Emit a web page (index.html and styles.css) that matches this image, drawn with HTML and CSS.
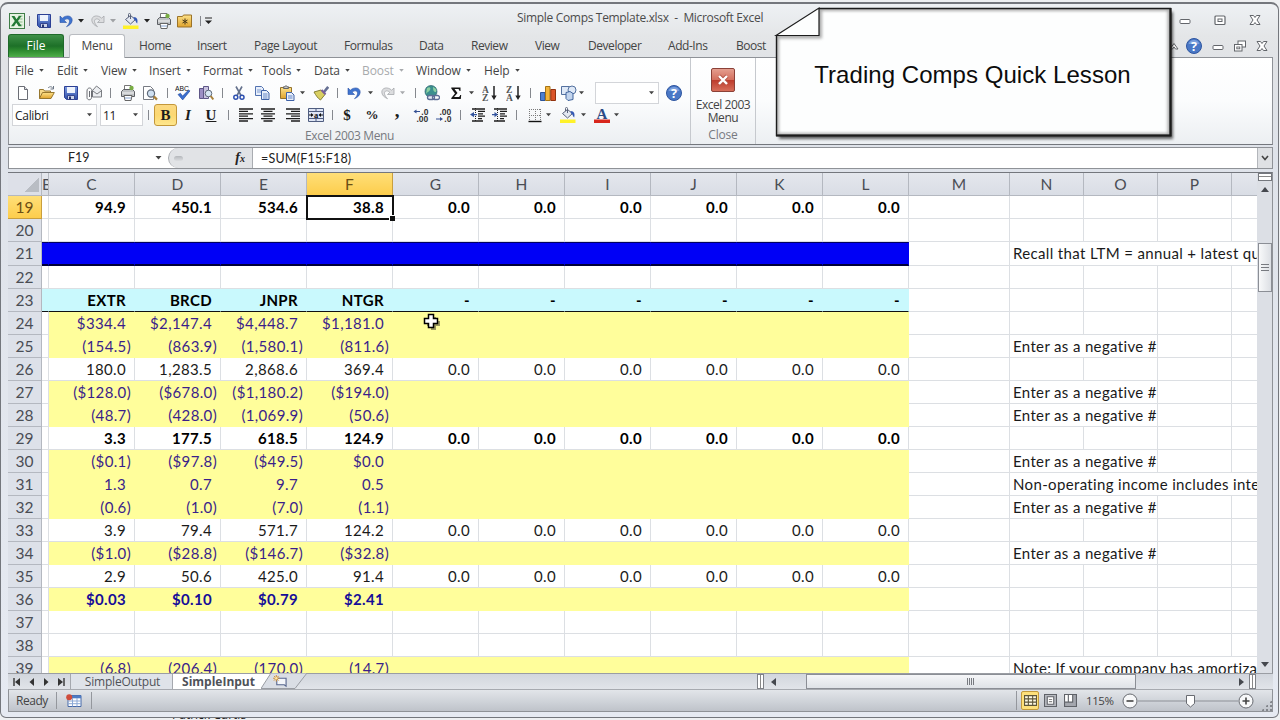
FILE: index.html
```html
<!DOCTYPE html>
<html lang="en">
<head>
    <meta charset="UTF-8">
    <meta name="viewport" content="width=device-width, initial-scale=1.0">
    <title>Simple Comps Template.xlsx - Microsoft Excel</title>
    <link rel="stylesheet" href="styles.css">
</head>
<body>
    <!-- Icon set -->
    <svg class="icon-defs" width="0" height="0">
        <defs>
            <linearGradient id="gBlue" x1="0" y1="0" x2="0" y2="1"><stop offset="0" stop-color="#7c9be0"/><stop offset="1" stop-color="#2f4fa8"/></linearGradient>
            <linearGradient id="gRed" x1="0" y1="0" x2="0" y2="1"><stop offset="0" stop-color="#e5a091"/><stop offset=".48" stop-color="#d4705f"/><stop offset=".52" stop-color="#bd3c2c"/><stop offset="1" stop-color="#d8705c"/></linearGradient>
            <linearGradient id="gGold" x1="0" y1="0" x2="0" y2="1"><stop offset="0" stop-color="#fde28a"/><stop offset="1" stop-color="#e0a32c"/></linearGradient>
        </defs>
        <symbol id="drop" viewBox="0 0 6 4"><path d="M0 0h6L3 3.6z" fill="currentColor"/></symbol>
        <symbol id="excel" viewBox="0 0 16 16"><rect x=".5" y=".5" width="15" height="15" fill="#e6f3e2" stroke="#3f7d47"/><path d="M9.5 3h4M9.5 6h4M9.5 9h4M9.5 12h4" stroke="#8dbb8b"/><path d="M2.500 3h3l2 3.300L9.800 3h2.700L9 8l3.800 5.300H9.600L7.300 9.700 5 13.300H2L5.800 8z" fill="#237a35"/></symbol>
        <symbol id="save" viewBox="0 0 16 16"><path d="M1.500 1.500h13v13h-11l-2-2z" fill="url(#gBlue)" stroke="#2c3f94"/><path d="M4 2h8v6H4z" fill="#eef3fc"/><path d="M4.500 10.500h7v4h-7z" fill="#cdd5ea" stroke="#34458f"/><path d="M6 11.500h2v3H6z" fill="#26346f"/></symbol>
        <symbol id="undo" viewBox="0 0 16 16"><path d="M2 3v6.500h6.500L6.200 7.300c2.600-2.500 5.500-1.500 5.300 1.200-.1 1.900-1.300 3.400-3 5.200 3.500-1.500 5.600-3.700 5.700-6.500C14.300 2.800 8.600 1.300 4.300 5.200z" fill="#3f74cf" stroke="#2a51a5" stroke-width=".6"/></symbol>
        <symbol id="redo" viewBox="0 0 16 16"><path d="M14 3v6.500H7.500l2.300-2.200C7.200 4.800 4.300 5.800 4.500 8.500c.1 1.900 1.300 3.400 3 5.200C4 12.200 1.900 10 1.800 7.200 1.700 2.800 7.400 1.300 11.700 5.200z" fill="#dcdddf" stroke="#a6a8ac" stroke-width=".8"/></symbol>
        <symbol id="bucket" viewBox="0 0 16 16"><path d="M2.500 6.500l5-4 5 4-5 4.500z" fill="#e3e8f1" stroke="#59627a"/><path d="M7.500 6V1.500c0-1.500-2-1.500-2 0V4" fill="none" stroke="#59627a"/><path d="M10.500 4c4 0 4.500 3 3.700 6.500C12.500 9.500 13 7 11 6.500z" fill="#3559b3"/><path d="M0 12.500h15.500V16H0z" fill="#fff22a"/></symbol>
        <symbol id="print" viewBox="0 0 16 16"><path d="M4.500 5V.5H11l1.500 2V6z" fill="#fff" stroke="#777"/><path d="M1.500 6.500l2-2h9l2 2v5h-13z" fill="#bfc2c5" stroke="#5d6064"/><path d="M2 8h12" stroke="#f4f4f4"/><path d="M4 10.500h8l-1 5H5z" fill="#fff" stroke="#666"/><path d="M5 13h6" stroke="#86a3cf"/><circle cx="11.500" cy="3" r="2.200" fill="#79ad43"/></symbol>
        <symbol id="folderStar" viewBox="0 0 16 16"><path d="M.5 3.500h5l1-1.500h8v12h-14z" fill="url(#gGold)" stroke="#9b7328"/><path d="M8 5.500v6M5.500 7l5 3M10.500 7l-5 3" stroke="#463717"/></symbol>
        <symbol id="custom" viewBox="0 0 8 8"><path d="M0 1h7" stroke="#222"/><path d="M0 3.500h7L3.500 7z" fill="#222"/></symbol>
        <symbol id="new" viewBox="0 0 16 16"><path d="M3.500 1.500h6l3 3v10h-9z" fill="#fff" stroke="#6a6d75"/><path d="M9.500 1.500v3h3" fill="#dde0e6" stroke="#6a6d75"/></symbol>
        <symbol id="open" viewBox="0 0 16 16"><path d="M.5 13.500v-9h4l1 1.500h6v3" fill="#f6d98a" stroke="#96772f"/><path d="M.5 13.500l3-6h11.800l-3.300 6z" fill="url(#gGold)" stroke="#96772f"/><path d="M9 3c2-2 4-1.500 5 .5M14.500 1v3h-3" fill="none" stroke="#6c7786"/></symbol>
        <symbol id="mail" viewBox="0 0 16 16"><path d="M6.500 5.500L10.500 1l5 4v7h-9z" fill="#eceef1" stroke="#7a7d82"/><path d="M7 6l4 3 4-3" fill="none" stroke="#7a7d82"/><path d="M5.500 6v6.500c0 3-4.500 3-4.500 0V6c0-4 5-4 5 0v6M3.500 6v6" fill="none" stroke="#6a6d73"/></symbol>
        <symbol id="preview" viewBox="0 0 16 16"><path d="M1.500 1.500h7l3 3v10h-10z" fill="#fff" stroke="#777b83"/><circle cx="9" cy="8.500" r="3.600" fill="#cfe0f1" stroke="#606b7b" stroke-width="1.200"/><path d="M11.800 11.400l3.200 3.200" stroke="#a8803a" stroke-width="2.200"/></symbol>
        <symbol id="spell" viewBox="0 0 16 16"><text x="0" y="5.500" font-family="Liberation Sans" font-size="6.800" fill="#111">ABC</text><path d="M3 9.500l2.500-1.200 2 2.800 6-6 1.500.8-7.300 9z" fill="#3b6fd0" stroke="#23489a" stroke-width=".6"/></symbol>
        <symbol id="research" viewBox="0 0 16 16"><path d="M1.500 3.500h4v10h-4z" fill="#9c8fc4" stroke="#5e5687"/><path d="M5.500 1.500h5v12h-5z" fill="#c9c3e0" stroke="#5e5687"/><circle cx="10.500" cy="8.500" r="3.300" fill="#d8e7f5" stroke="#5e6979"/><path d="M12.700 11l2.600 3.500" stroke="#a8803a" stroke-width="2"/></symbol>
        <symbol id="cut" viewBox="0 0 16 16"><path d="M5 1.500l5 9M11 1.500l-5 9" stroke="#64718c" stroke-width="1.600"/><circle cx="4.800" cy="12.300" r="2" fill="none" stroke="#2e50b0" stroke-width="1.500"/><circle cx="11" cy="12.300" r="2" fill="none" stroke="#2e50b0" stroke-width="1.500"/></symbol>
        <symbol id="copy" viewBox="0 0 16 16"><path d="M1.500 1.500h6l2 2v7h-8z" fill="#e8effb" stroke="#5272b0"/><path d="M3 5h4M3 7h4" stroke="#7e9bd0"/><path d="M7.500 5.500h5l2.500 2.500v6.500H7.500z" fill="#e8effb" stroke="#3e61a6"/><path d="M9 9h4.500M9 11h4.500M9 13h4.500" stroke="#6486c6"/></symbol>
        <symbol id="paste" viewBox="0 0 16 16"><path d="M1.500 2.500h11v11h-11z" fill="url(#gGold)" stroke="#94722c"/><path d="M4.500 3.500V1.800h1.500L7 .5l1 1.300h1.500v1.700z" fill="#c7c9cc" stroke="#666"/><path d="M7.500 7.500h5l2.500 2.500v5.500H7.500z" fill="#e8effb" stroke="#3e61a6"/><path d="M9 11h4.500M9 13h4.500" stroke="#6486c6"/></symbol>
        <symbol id="brush" viewBox="0 0 16 16"><path d="M15.200 1.800L11 7" stroke="#656f93" stroke-width="2.600"/><path d="M1 7l7-2 4 4.500-4.500 5.500C5 13.500 3 10.500 1 7z" fill="#d9cf62" stroke="#857f35"/><path d="M8.500 5l4 4.300" stroke="#7a5f9c" stroke-width="2"/></symbol>
        <symbol id="globe" viewBox="0 0 16 16"><circle cx="7" cy="6.500" r="6" fill="#3b8f8e" stroke="#28616e" stroke-width=".7"/><path d="M3 3c3-2 4 0 3 2S3 7 2 9M9 2c3 1 4 3 3 5-2 0-3-1-3-5z" fill="#8cd0a2"/><rect x="3.500" y="10.500" width="7" height="4" rx="2" fill="#e6ebf5" stroke="#5c6d95" stroke-width="1.300"/><rect x="8.500" y="10.500" width="7" height="4" rx="2" fill="none" stroke="#5c6d95" stroke-width="1.300"/></symbol>
        <symbol id="sigma" viewBox="0 0 16 16"><path d="M3.300 2.500h9.200V6h-1c-.2-1.400-.7-1.900-2-1.900H6.500L9.500 8l-3.500 4h4c1.400 0 1.900-.5 2.200-2h1l-.4 4H3.300v-.9L7 8.500 3.300 3.600z" fill="#151515"/></symbol>
        <symbol id="sortAz" viewBox="0 0 16 16"><text x="0" y="7.500" font-family="Liberation Serif" font-size="9.500" font-weight="700" fill="#555">A</text><text x="0" y="15.500" font-family="Liberation Serif" font-size="9.500" font-weight="700" fill="#555">Z</text><path d="M12 1v11" stroke="#222" stroke-width="1.500"/><path d="M9.300 10.500h5.400L12 15z" fill="#222"/></symbol>
        <symbol id="sortZa" viewBox="0 0 16 16"><text x="0" y="7.500" font-family="Liberation Serif" font-size="9.500" font-weight="700" fill="#555">Z</text><text x="0" y="15.500" font-family="Liberation Serif" font-size="9.500" font-weight="700" fill="#555">A</text><path d="M12 1v11" stroke="#222" stroke-width="1.500"/><path d="M9.300 10.500h5.400L12 15z" fill="#222"/></symbol>
        <symbol id="chart" viewBox="0 0 16 16"><path d="M.5 7.500h4.500v8H.5z" fill="#4d80d0" stroke="#2c5499"/><path d="M5.500 1.500h4.500v14H5.500z" fill="#f3b43a" stroke="#a67414"/><path d="M10.800 4.500h4.700v11h-4.700z" fill="#db552a" stroke="#92330f"/></symbol>
        <symbol id="shapes" viewBox="0 0 16 16"><path d="M.5 1.500h8v8h-8z" fill="#dfe9f7" stroke="#54719f"/><circle cx="11" cy="5" r="4" fill="#dfe9f7" stroke="#54719f"/><path d="M5 7.500l4-1 3 2v6l-5 1-2-2z" fill="#c3d5ee" stroke="#3f639c"/></symbol>
        <symbol id="help" viewBox="0 0 16 16"><circle cx="8" cy="8" r="7.500" fill="#4a78c6" stroke="#2f56a0"/><path d="M2.500 6a5.800 5.800 0 0 1 11 0" fill="#7ba0dd"/><text x="8" y="12.600" text-anchor="middle" font-family="Open Sans" font-size="12.500" font-weight="700" fill="#fff">?</text></symbol>
        <symbol id="alignL" viewBox="0 0 16 16"><path d="M1 2h14M1 4.400h9M1 6.800h14M1 9.200h9M1 11.600h14M1 14h9" stroke="#1d1d1d" stroke-width="1.300"/></symbol>
        <symbol id="alignC" viewBox="0 0 16 16"><path d="M1 2h14M3.500 4.400h9M1 6.800h14M3.500 9.200h9M1 11.600h14M3.500 14h9" stroke="#1d1d1d" stroke-width="1.300"/></symbol>
        <symbol id="alignR" viewBox="0 0 16 16"><path d="M1 2h14M6 4.400h9M1 6.800h14M6 9.200h9M1 11.600h14M6 14h9" stroke="#1d1d1d" stroke-width="1.300"/></symbol>
        <symbol id="merge" viewBox="0 0 16 16"><path d="M.5 1.500h15v13H.5z" fill="#dfe6f5" stroke="#4f5d80"/><path d="M.5 4.500h15M.5 11.500h15M8 1.500v3M8 11.500v3" stroke="#4f5d80"/><path d="M1 8h3.500M15 8h-3.500" stroke="#111"/><path d="M3 6l2.500 2L3 10zM13 6l-2.500 2 2.500 2z" fill="#111"/><text x="8" y="10.500" text-anchor="middle" font-family="Liberation Serif" font-size="8.500" font-weight="700" fill="#111">a</text></symbol>
        <symbol id="decInc" viewBox="0 0 16 16"><text x="8.300" y="7.500" font-family="Liberation Sans" font-size="8.500" font-weight="700" fill="#333">.0</text><text x="3.500" y="15" font-family="Liberation Sans" font-size="8.500" font-weight="700" fill="#333">.00</text><path d="M2 4.500h5" stroke="#334f92"/><path d="M3.500 2.500v4L.5 4.500z" fill="#334f92"/></symbol>
        <symbol id="decDec" viewBox="0 0 16 16"><text x="3.500" y="7.500" font-family="Liberation Sans" font-size="8.500" font-weight="700" fill="#333">.00</text><text x="8.300" y="15" font-family="Liberation Sans" font-size="8.500" font-weight="700" fill="#333">.0</text><path d="M0 12h5" stroke="#334f92"/><path d="M4 10v4l3-2z" fill="#334f92"/></symbol>
        <symbol id="outdent" viewBox="0 0 16 16"><path d="M2 2h13M8 4.400h7M8 6.800h5M8 9.200h7M8 11.600h4M2 14h11" stroke="#1d1d1d" stroke-width="1.300"/><path d="M5.500 1v14" stroke="#222" stroke-dasharray="1 1"/><path d="M0 7.500L4 5v2h3v1.200H4v2z" fill="#33559f"/></symbol>
        <symbol id="indent" viewBox="0 0 16 16"><path d="M2 2h13M8 4.400h7M8 6.800h5M8 9.200h7M8 11.600h4M2 14h11" stroke="#1d1d1d" stroke-width="1.300"/><path d="M5.500 1v14" stroke="#222" stroke-dasharray="1 1"/><path d="M6 7.500L2.500 5v2H0v1.200h2.500v2z" fill="#33559f"/></symbol>
        <symbol id="borders" viewBox="0 0 16 16"><path d="M2 2.500h12M2.500 2v12M8.500 2v12M13.500 2v12M2 8.500h12" fill="none" stroke="#7a7a7a" stroke-dasharray="1 1"/><path d="M1.500 14.500h13" stroke="#111" stroke-width="1.400"/></symbol>
        <symbol id="fontColor" viewBox="0 0 16 16"><text x="8" y="11.500" text-anchor="middle" font-family="Liberation Serif" font-size="15" font-weight="700" fill="#2c4a86">A</text><path d="M0 12.500h16V16H0z" fill="#d8261c"/></symbol>
        <symbol id="closeBig" viewBox="0 0 24 24"><rect x=".5" y=".5" width="23" height="23" rx="1.500" fill="url(#gRed)" stroke="#8b4138"/><path d="M8 8l8 8M16 8l-8 8" stroke="#b55346" stroke-width="4"/><path d="M8 8l8 8M16 8l-8 8" stroke="#fff" stroke-width="2.400"/></symbol>
        <symbol id="wMin" viewBox="0 0 12 12"><rect x="1" y="5.500" width="10" height="4" rx="1" fill="#fff" stroke="#63666b"/></symbol>
        <symbol id="wMax" viewBox="0 0 12 12"><rect x="1" y="2" width="10" height="8.500" rx="1" fill="#fff" stroke="#63666b" stroke-width="1.200"/><rect x="4" y="5" width="4" height="2.500" fill="#fff" stroke="#63666b"/></symbol>
        <symbol id="wRestore" viewBox="0 0 12 12"><rect x="4" y="1" width="7.500" height="6" fill="#fff" stroke="#63666b"/><rect x=".5" y="4.500" width="7.500" height="6.500" fill="#fff" stroke="#63666b"/><rect x="2.800" y="7" width="3" height="1.800" fill="none" stroke="#63666b" stroke-width=".9"/></symbol>
        <symbol id="wClose" viewBox="0 0 12 12"><path d="M1 1.500h3.500L6 3.500l1.500-2H11L8 6l3 4.500H7.500L6 8.500l-1.500 2H1L4 6z" fill="#fff" stroke="#63666b"/></symbol>
        <symbol id="wUp" viewBox="0 0 12 12"><path d="M2 9l4-5.500L10 9H7.500L6 7 4.500 9z" fill="#fff" stroke="#63666b"/></symbol>
        <symbol id="newSheet" viewBox="0 0 16 14"><path d="M4 3.500h10v8.500l-2-1.500H4z" fill="#f4f6fa" stroke="#56658e" stroke-width="1.200"/><path d="M3.500 0v7M0 3.500h7M1 1l5 5M6 1L1 6" stroke="#d48b25"/><circle cx="3.500" cy="3.500" r="1.300" fill="#ffe9a8"/></symbol>
        <symbol id="macro" viewBox="0 0 16 14"><path d="M2 1.500h13v11H2z" fill="#fff" stroke="#4669a8"/><path d="M2 1.500h13v2.800H2z" fill="#4f7cc4"/><path d="M2 7h13M2 9.700h13M6.500 4v8.500M11 4v8.500" stroke="#8ca9d6"/><circle cx="3.200" cy="3.200" r="3" fill="#cf4c3b"/></symbol>
    </svg>

    <div class="behind">Patrick Curtis</div>

    <div class="window">
        <!-- Title bar -->
        <header class="titlebar">
            <div class="qat">
                <svg class="icon"><use href="#excel"/></svg>
                <i class="sep"></i>
                <svg class="icon"><use href="#save"/></svg>
                <svg class="icon"><use href="#undo"/></svg>
                <svg class="drop"><use href="#drop"/></svg>
                <svg class="icon"><use href="#redo"/></svg>
                <svg class="drop dim"><use href="#drop"/></svg>
                <svg class="icon"><use href="#bucket"/></svg>
                <svg class="drop"><use href="#drop"/></svg>
                <svg class="icon"><use href="#print"/></svg>
                <svg class="icon"><use href="#folderStar"/></svg>
                <i class="sep"></i>
                <svg class="custom"><use href="#custom"/></svg>
            </div>
            <h1 class="title">Simple Comps Template.xlsx&nbsp; -&nbsp; Microsoft Excel</h1>
            <div class="controls">
                <svg><use href="#wMin"/></svg>
                <svg><use href="#wMax"/></svg>
                <svg><use href="#wClose"/></svg>
            </div>
        </header>

        <!-- Ribbon tabs -->
        <nav class="tabs">
            <span class="tab-file">File</span>
            <span class="tab-active">Menu</span>
            <div class="tab-list">
                <span>Home</span><span>Insert</span><span>Page Layout</span><span>Formulas</span><span>Data</span><span>Review</span><span>View</span><span>Developer</span><span>Add-Ins</span><span>Boost</span>
            </div>
            <div class="doc-controls">
                <svg><use href="#wUp"/></svg>
                <svg class="icon"><use href="#help"/></svg>
                <svg><use href="#wMin"/></svg>
                <svg><use href="#wRestore"/></svg>
                <svg><use href="#wClose"/></svg>
            </div>
        </nav>

        <!-- Ribbon -->
        <section class="ribbon">
            <div class="group group-menu">
                <div class="menus">
                    <span>File<svg class="drop"><use href="#drop"/></svg></span>
                    <span>Edit<svg class="drop"><use href="#drop"/></svg></span>
                    <span>View<svg class="drop"><use href="#drop"/></svg></span>
                    <span>Insert<svg class="drop"><use href="#drop"/></svg></span>
                    <span>Format<svg class="drop"><use href="#drop"/></svg></span>
                    <span>Tools<svg class="drop"><use href="#drop"/></svg></span>
                    <span>Data<svg class="drop"><use href="#drop"/></svg></span>
                    <span class="dim">Boost<svg class="drop"><use href="#drop"/></svg></span>
                    <span>Window<svg class="drop"><use href="#drop"/></svg></span>
                    <span>Help<svg class="drop"><use href="#drop"/></svg></span>
                </div>
                <div class="tools tools-standard">
                    <svg class="icon"><use href="#new"/></svg>
                    <svg class="icon"><use href="#open"/></svg>
                    <svg class="icon"><use href="#save"/></svg>
                    <svg class="icon"><use href="#mail"/></svg>
                    <i class="sep"></i>
                    <svg class="icon"><use href="#print"/></svg>
                    <svg class="icon"><use href="#preview"/></svg>
                    <i class="sep"></i>
                    <svg class="icon"><use href="#spell"/></svg>
                    <svg class="icon"><use href="#research"/></svg>
                    <i class="sep"></i>
                    <svg class="icon"><use href="#cut"/></svg>
                    <svg class="icon"><use href="#copy"/></svg>
                    <svg class="icon"><use href="#paste"/></svg>
                    <svg class="drop"><use href="#drop"/></svg>
                    <svg class="icon"><use href="#brush"/></svg>
                    <i class="sep"></i>
                    <svg class="icon"><use href="#undo"/></svg>
                    <svg class="drop"><use href="#drop"/></svg>
                    <svg class="icon"><use href="#redo"/></svg>
                    <svg class="drop dim"><use href="#drop"/></svg>
                    <i class="sep"></i>
                    <svg class="icon"><use href="#globe"/></svg>
                    <svg class="icon"><use href="#sigma"/></svg>
                    <svg class="drop"><use href="#drop"/></svg>
                    <svg class="icon"><use href="#sortAz"/></svg>
                    <svg class="icon"><use href="#sortZa"/></svg>
                    <i class="sep"></i>
                    <svg class="icon"><use href="#chart"/></svg>
                    <svg class="icon"><use href="#shapes"/></svg>
                    <svg class="drop"><use href="#drop"/></svg>
                    <div class="combo combo-zoom"><svg class="drop"><use href="#drop"/></svg></div>
                    <svg class="icon"><use href="#help"/></svg>
                </div>
                <div class="tools tools-format">
                    <div class="combo combo-font">Calibri<svg class="drop"><use href="#drop"/></svg></div>
                    <div class="combo combo-size">11<svg class="drop"><use href="#drop"/></svg></div>
                    <i class="sep"></i>
                    <b class="letter bold-on">B</b>
                    <b class="letter italic">I</b>
                    <b class="letter underline">U</b>
                    <i class="sep"></i>
                    <svg class="icon"><use href="#alignL"/></svg>
                    <svg class="icon"><use href="#alignC"/></svg>
                    <svg class="icon"><use href="#alignR"/></svg>
                    <svg class="icon"><use href="#merge"/></svg>
                    <i class="sep"></i>
                    <b class="letter">$</b>
                    <b class="letter percent">%</b>
                    <b class="letter comma">,</b>
                    <svg class="icon"><use href="#decInc"/></svg>
                    <svg class="icon"><use href="#decDec"/></svg>
                    <i class="sep"></i>
                    <svg class="icon"><use href="#outdent"/></svg>
                    <svg class="icon"><use href="#indent"/></svg>
                    <i class="sep"></i>
                    <svg class="icon"><use href="#borders"/></svg>
                    <svg class="drop"><use href="#drop"/></svg>
                    <svg class="icon"><use href="#bucket"/></svg>
                    <svg class="drop"><use href="#drop"/></svg>
                    <svg class="icon"><use href="#fontColor"/></svg>
                    <svg class="drop"><use href="#drop"/></svg>
                </div>
                <div class="group-label">Excel 2003 Menu</div>
            </div>
            <div class="group group-close">
                <svg class="close-big"><use href="#closeBig"/></svg>
                <div class="close-text">Excel 2003<br>Menu</div>
                <div class="group-label">Close</div>
            </div>
        </section>

        <!-- Formula bar -->
        <section class="formula">
            <div class="name-box"><span>F19</span><svg class="drop"><use href="#drop"/></svg></div>
            <div class="fx"><i class="knob"></i><em>f<small>x</small></em></div>
            <div class="formula-text">=SUM(F15:F18)</div>
            <div class="formula-toggle"><svg viewBox="0 0 8 6"><path d="M1 1l3 3.500L7 1" fill="none" stroke="#444" stroke-width="1.600"/></svg></div>
        </section>

        <!-- Worksheet -->
        <main class="work">
            <div class="sheet" id="sheet"></div>
            <div class="vscroll">
                <div class="split"></div>
                <i class="arrow up"></i>
                <div class="vthumb"></div>
                <i class="arrow down"></i>
            </div>
        </main>

        <!-- Sheet tabs -->
        <div class="sheetbar">
            <div class="sheet-nav">
                <svg viewBox="0 0 8 8"><path d="M1 0v8" stroke="#333" stroke-width="1.400"/><path d="M7 0v8L2 4z" fill="#333"/></svg>
                <svg viewBox="0 0 8 8"><path d="M6 0v8L1.500 4z" fill="#333"/></svg>
                <svg viewBox="0 0 8 8"><path d="M2 0v8l4.500-4z" fill="#333"/></svg>
                <svg viewBox="0 0 8 8"><path d="M7 0v8" stroke="#333" stroke-width="1.400"/><path d="M1 0v8l5-4z" fill="#333"/></svg>
            </div>
            <div class="sheet-tab">SimpleOutput</div>
            <div class="sheet-tab active">SimpleInput</div>
            <div class="sheet-tab add">
                <svg class="add-edge" viewBox="0 0 46 16"><path d="M0 15.500L10 0h36L34 15.500z" fill="#dadee5" stroke="#9a9da3"/></svg>
                <svg class="add-icon"><use href="#newSheet"/></svg>
            </div>
            <div class="hscroll">
                <i class="hsplit"></i>
                <i class="arrow left"></i>
                <div class="hthumb"></div>
                <i class="arrow right"></i>
                <i class="hsplit"></i>
            </div>
        </div>

        <!-- Status bar -->
        <footer class="status">
            <span class="ready">Ready</span>
            <svg class="macro"><use href="#macro"/></svg>
            <i class="status-sep"></i>
            <div class="views">
                <div class="view on"><svg viewBox="0 0 12 12"><path d="M.5 1.500h11v9H.5zM.5 4.500h11M.5 7.500h11M4 1.500v9M8 1.500v9" fill="#fffbe5" stroke="#5d5538"/></svg></div>
                <div class="view"><svg viewBox="0 0 12 12"><path d="M.5.5h11v11H.5z" fill="#b9bcc2" stroke="#5f6268"/><path d="M3 2.500h6v7H3z" fill="#fff" stroke="#5f6268"/><path d="M4.500 5h3M4.500 7h3" stroke="#888"/></svg></div>
                <div class="view"><svg viewBox="0 0 12 12"><path d="M.5.5h11v11H.5z" fill="#a4a7ae" stroke="#5f6268"/><path d="M.5.500h3.500v7H.5zM4 .5h4v7H4z" fill="#fff" stroke="#5f6268"/></svg></div>
            </div>
            <span class="percent-text">115%</span>
            <svg class="zoomer" viewBox="0 0 134 18">
                <path d="M17 9h100" stroke="#8d9097"/>
                <circle cx="9" cy="9" r="7" fill="#f7f8f9" stroke="#686b71"/><path d="M5.500 9h7" stroke="#444" stroke-width="1.600"/>
                <path d="M65.500 3.500h8v8l-4 3.500-4-3.500z" fill="#fff" stroke="#686b71"/>
                <circle cx="125" cy="9" r="7" fill="#f7f8f9" stroke="#686b71"/><path d="M121.500 9h7M125 5.500v7" stroke="#444" stroke-width="1.600"/>
            </svg>
            <i class="grip"></i>
        </footer>
    </div>

    <!-- Callout over the window -->
    <div class="callout">
        <svg viewBox="0 0 404 138" width="404" height="138">
            <defs>
                <filter id="soft" x="-5%" y="-10%" width="110%" height="120%"><feGaussianBlur stdDeviation="1.600"/></filter>
                <clipPath id="noteClip"><path d="M2 29.500L45 2h351.500v128H2z"/></clipPath>
            </defs>
            <path d="M5 33L48 6h351v127H5z" fill="#000" opacity=".6" filter="url(#soft)"/>
            <path d="M2 29.500L45 2h351.500v128H2z" fill="#fdfefe"/>
            <g clip-path="url(#noteClip)">
                <path d="M2 29.500h43V2h351.500v128H2z" fill="none" stroke="#777" stroke-width="6" opacity=".6" filter="url(#soft)"/>
                <path d="M2 29.500L45 2v27.500z" fill="#fdfefe"/>
            </g>
            <path d="M2 29.500L45 2v27.500z" fill="none" stroke="#1c1c1c" stroke-width="1.200"/>
            <path d="M45 2.500h351.500v127H2.500v-100" fill="none" stroke="#1c1c1c" stroke-width="1.400"/>
            <path d="M396.500 2v127.500H2" fill="none" stroke="#1c1c1c" stroke-width="2.200"/>
        </svg>
        <p>Trading Comps Quick Lesson</p>
    </div>

    <!-- Cell cursor -->
    <svg class="cursor" viewBox="0 0 18 18"><path d="M8 4h5v4h4v5h-4v4H8v-4H4V8h4z" fill="#000" opacity=".4"/><path d="M5.500 1.500h5v4h4v5h-4v4h-5v-4h-4v-5h4z" fill="#fff" stroke="#000" stroke-width="1.500"/></svg>

    <script>
        const sheet = document.getElementById("sheet");
        const letters = ["B", "C", "D", "E", "F", "G", "H", "I", "J", "K", "L", "M", "N", "O", "P", ""];
        const zeros = ["0.0", "0.0", "0.0", "0.0", "0.0", "0.0"];
        const dashes = ["-", "-", "-", "-", "-", "-"];
        const negative = "Enter as a negative #";

        // type: plain, bold, banner, head, input, total
        const rows = [
            { n: 19, type: "bold", cells: ["94.9", "450.1", "534.6", "38.8", ...zeros] },
            { n: 20, type: "plain" },
            { n: 21, type: "banner", note: "Recall that LTM = annual + latest quarter" },
            { n: 22, type: "plain" },
            { n: 23, type: "head", cells: ["EXTR", "BRCD", "JNPR", "NTGR", ...dashes] },
            { n: 24, type: "input", cells: ["$334.4", "$2,147.4", "$4,448.7", "$1,181.0"] },
            { n: 25, type: "input", cells: ["(154.5)", "(863.9)", "(1,580.1)", "(811.6)"], note: negative },
            { n: 26, type: "plain", cells: ["180.0", "1,283.5", "2,868.6", "369.4", ...zeros] },
            { n: 27, type: "input", cells: ["($128.0)", "($678.0)", "($1,180.2)", "($194.0)"], note: negative },
            { n: 28, type: "input", cells: ["(48.7)", "(428.0)", "(1,069.9)", "(50.6)"], note: negative },
            { n: 29, type: "bold", cells: ["3.3", "177.5", "618.5", "124.9", ...zeros] },
            { n: 30, type: "input", cells: ["($0.1)", "($97.8)", "($49.5)", "$0.0"], note: negative },
            { n: 31, type: "input", cells: ["1.3", "0.7", "9.7", "0.5"], note: "Non-operating income includes interest" },
            { n: 32, type: "input", cells: ["(0.6)", "(1.0)", "(7.0)", "(1.1)"], note: negative },
            { n: 33, type: "plain", cells: ["3.9", "79.4", "571.7", "124.2", ...zeros] },
            { n: 34, type: "input", cells: ["($1.0)", "($28.8)", "($146.7)", "($32.8)"], note: negative },
            { n: 35, type: "plain", cells: ["2.9", "50.6", "425.0", "91.4", ...zeros] },
            { n: 36, type: "input total", cells: ["$0.03", "$0.10", "$0.79", "$2.41"] },
            { n: 37, type: "plain" },
            { n: 38, type: "plain" },
            { n: 39, type: "input", cells: ["(6.8)", "(206.4)", "(170.0)", "(14.7)"], note: "Note: If your company has amortization" }
        ];

        function addCell(row, className, text) {
            const cell = document.createElement("div");
            cell.className = className;
            cell.textContent = text || "";
            row.appendChild(cell);
        }

        const head = document.createElement("div");
        head.className = "row col-heads";
        addCell(head, "corner");
        letters.forEach(l => addCell(head, l === "F" ? "col-head selected" : "col-head", l));
        sheet.appendChild(head);

        rows.forEach(data => {
            const row = document.createElement("div");
            row.className = "row " + data.type;
            addCell(row, data.n === 19 ? "row-head selected" : "row-head", data.n);
            addCell(row, "cell edge");
            for (let i = 0; i < 10; i++) {
                const text = data.cells && data.cells[i] ? data.cells[i] : "";
                let name = "cell num";
                if (text.startsWith("(")) name += " neg";
                if (data.n === 19 && i === 3) name += " active-cell";
                addCell(row, name, text);
            }
            addCell(row, "cell");
            if (data.note === negative) {
                addCell(row, "cell note short", data.note);
                addCell(row, "cell");
                addCell(row, "cell");
            } else if (data.note) {
                addCell(row, "cell note", data.note);
            } else {
                for (let i = 0; i < 4; i++) addCell(row, "cell");
            }
            sheet.appendChild(row);
        });
    </script>
</body>
</html>
```
FILE: styles.css
```css
* {
    margin: 0;
    padding: 0;
    box-sizing: border-box;
}

body {
    width: 1280px;
    height: 720px;
    overflow: hidden;
    position: relative;
    padding-top: 2px;
    background-color: #eef0f2;
    font-family: 'Open Sans', 'Noto Sans', sans-serif;
    font-size: 12px;
    color: #444;
}

.icon-defs {
    position: absolute;
}

.behind {
    position: absolute;
    left: 172px;
    top: 707px;
    font-size: 12px;
    line-height: 16px;
    color: #222;
}

/* Window frame */
.window {
    position: relative;
    width: 1279px;
    height: 716px;
    display: flex;
    flex-direction: column;
    padding: 0 5px 0 7px;
    border: 1px solid #74777d;
    border-top-width: 2px;
    border-radius: 8px 8px 6px 6px;
    background: linear-gradient(#eef1f4, #e4e6e8 32px, #e1e3e6 56px, #dfe3ea 150px, #e6eaf2);
}

.icon {
    width: 16px;
    height: 16px;
    display: block;
}

.drop {
    width: 6px;
    height: 4px;
    display: block;
    color: #444;
}

.sep {
    width: 1px;
    height: 10px;
    background-color: #85888e;
}

.dim,
.dim .drop,
.drop.dim {
    color: #a8aaad;
}

/* Title bar */
.titlebar {
    height: 30px;
    display: flex;
    align-items: flex-start;
}

.qat {
    width: 509px;
    height: 33px;
    padding-left: 1px;
    display: grid;
    grid-template-columns: 20px 7px 22px 20px 12px 20px 13px 21px 12px 21px 23px 4px 8px;
    align-items: center;
}

.qat .drop {
    color: #222;
}

.qat .drop.dim {
    color: #a0a2a5;
}

.custom {
    width: 8px;
    height: 8px;
    margin-left: 1px;
}

.title {
    width: 650px;
    font-size: 12px;
    font-weight: 400;
    line-height: 16px;
    margin-top: 6px;
    letter-spacing: -0.32px;
    white-space: nowrap;
    color: #4b4b4b;
}

.controls {
    display: flex;
    gap: 23px;
    padding-top: 10px;
    margin-left: 12px;
}

.controls svg,
.doc-controls svg {
    width: 12px;
    height: 12px;
    flex-shrink: 0;
}

/* Ribbon tabs */
.tabs {
    height: 23px;
    display: flex;
    align-items: stretch;
    line-height: 23px;
}

.tab-file {
    width: 56px;
    text-align: center;
    color: #fff;
    border: 1px solid #1f6a2a;
    border-bottom: none;
    border-radius: 3px 3px 0 0;
    line-height: 22px;
    background: linear-gradient(#3f9048, #1d7028 50%, #2d8a2f 70%, #4fae4a);
}

.tab-active {
    width: 56px;
    margin-left: 5px;
    height: 24px;
    z-index: 1;
    text-align: center;
    background-color: #fff;
    border: 1px solid #b9bcc1;
    border-bottom: none;
    border-radius: 3px 3px 0 0;
    line-height: 22px;
    letter-spacing: -0.3px;
}

.tab-list {
    width: 1037px;
    padding-left: 14px;
    display: grid;
    grid-template-columns: 58px 57px 90px 75px 52px 64px 53px 80px 68px 60px;
    letter-spacing: -0.45px;
    white-space: nowrap;
}

.doc-controls {
    display: grid;
    grid-template-columns: 18px 26px 22px 22px 12px;
    align-items: center;
    margin-left: 6px;
}

.doc-controls .icon {
    width: 16px;
    height: 16px;
}

/* Ribbon */
.ribbon {
    height: 88px;
    display: flex;
    border: 1px solid #8f9297;
    border-bottom-color: #74777d;
    background: linear-gradient(#fff, #fbfcfd 50%, #eceff2);
}

.group {
    border-right: 1px solid #c6c9ce;
}

.group-menu {
    width: 682px;
}

.menus {
    height: 23px;
    margin-top: 1px;
    padding-left: 6px;
    display: grid;
    grid-template-columns: 42px 44px 48px 54px 59px 52px 48px 54px 68px 60px;
    line-height: 23px;
    letter-spacing: -0.1px;
}

.menus span {
    display: flex;
    align-items: center;
    gap: 5px;
}

.menus .drop {
    width: 5px;
    height: 3px;
}

.tools {
    height: 22px;
    display: grid;
    align-items: center;
}

.tools .drop {
    width: 5px;
    height: 4px;
}

.tools-standard {
    padding-left: 6px;
    grid-template-columns: 24px 24px 23px 24px 10px 22px 25px 8px 23px 24px 9px 23px 25px 21px 13px 24px 9px 22px 12px 20px 15px 9px 24px 21px 13px 24px 24px 10px 21px 18px 16px 71px 16px;
}

.tools-format {
    padding-left: 3px;
    grid-template-columns: 88px 48px 6px 26px 23px 25px 10px 22px 25px 23px 24px 7px 25px 25px 24px 23px 24px 10px 22px 24px 11px 19px 14px 21px 13px 20px 10px;
}

.combo {
    height: 22px;
    display: flex;
    align-items: center;
    justify-content: space-between;
    padding: 0 4px 0 2px;
    border: 1px solid #d3d5d9;
    background-color: #fff;
    color: #222;
    letter-spacing: -0.3px;
}

.combo-font {
    width: 85px;
}

.combo-size {
    width: 43px;
}

.combo-zoom {
    width: 64px;
    justify-content: flex-end;
}

.letter {
    width: 16px;
    text-align: center;
    font-family: 'Liberation Serif', serif;
    font-size: 15px;
    line-height: 20px;
    color: #1c1c1c;
}

.bold-on {
    width: 23px;
    height: 22px;
    border: 1px solid #c3973a;
    border-radius: 3px;
    background: linear-gradient(#fbd983, #fcd872 50%, #fee68c);
}

.italic {
    font-style: italic;
}

.underline {
    text-decoration: underline;
}

.percent {
    font-size: 13px;
}

.comma {
    font-size: 19px;
    line-height: 12px;
    padding-bottom: 8px;
}

.group-label {
    text-align: center;
    line-height: 17px;
    color: #777a80;
    letter-spacing: -0.2px;
}

.group-menu .group-label {
    padding: 1px 0 0 0;
    letter-spacing: -0.35px;
}

.group-close {
    width: 65px;
    letter-spacing: -0.45px;
    text-align: center;
}

.close-big {
    width: 24px;
    height: 24px;
    display: block;
    margin: 10px auto 6px;
}

.close-text {
    line-height: 13px;
    height: 28px;
    white-space: nowrap;
}

/* Formula bar */
.formula {
    height: 22px;
    margin-top: 2px;
    display: flex;
    border: 1px solid #8f9297;
    background-color: #fff;
    line-height: 20px;
    color: #222;
}

.name-box {
    width: 159px;
    display: flex;
    align-items: center;
    padding-left: 59px;
    justify-content: space-between;
    padding-right: 6px;
    font-family: 'Lato', 'Open Sans', sans-serif;
    font-size: 12.5px;
}

.name-box .drop {
    width: 7px;
}

.fx {
    width: 85px;
    display: flex;
    align-items: center;
    justify-content: space-between;
    padding: 0 6px 0 5px;
    border: 1px solid #a9acb1;
    border-width: 0 1px 0 1px;
    border-radius: 10px 0 0 10px;
    background-color: #e1e3e6;
}

.fx em {
    font: italic bold 14px/18px 'Liberation Serif', serif;
    padding-right: 1px;
}

.fx small {
    font-size: 10px;
}

.knob {
    width: 9px;
    height: 5px;
    border-radius: 5px;
    background: linear-gradient(#b4b7bb, #dcdee1);
}

.formula-text {
    flex: 1;
    padding-left: 8px;
    font-family: 'Lato', 'Open Sans', sans-serif;
    font-size: 12.5px;
    letter-spacing: 0.2px;
    padding-top: 1px;
}

.formula-toggle {
    width: 15px;
    display: flex;
    align-items: center;
    justify-content: center;
    border-left: 1px solid #b3b6bb;
    background-color: #dfe1e4;
}

.formula-toggle svg {
    width: 8px;
    height: 6px;
}

/* Worksheet */
.work {
    height: 501px;
    margin-top: 3px;
    display: flex;
    border-top: 1px solid #74777d;
    border-right: 1px solid #8f9297;
    overflow: hidden;
}

.sheet {
    width: 1249px;
    height: 500px;
    overflow: hidden;
    background-color: #fff;
    font-family: 'Lato', 'Open Sans', sans-serif;
    font-size: 15px;
    letter-spacing: 0.35px;
    color: #1a1a1a;
}

.row {
    height: 23px;
    display: grid;
    grid-template-columns: 34px 7px repeat(10, 86px) 101px repeat(3, 74px) 26px;
    grid-template-rows: 100%;
    line-height: 23px;
}

.corner,
.col-head,
.row-head {
    border-right: 1px solid #b4b8c0;
    border-bottom: 1px solid #b4b8c0;
    text-align: center;
    letter-spacing: 0;
    line-height: 22px;
    color: #4a4d54;
}

.corner {
    background: linear-gradient(135deg, transparent 50%, #b9bdc4 50%) 17px 5px / 14px 14px no-repeat #dde0e8;
}

.col-head {
    overflow: hidden;
    font-size: 15.5px;
    background: linear-gradient(#e4e7ed, #d9dde5);
}

.row-head {
    font-size: 15.5px;
    background-color: #dde1e9;
}

.col-head.selected,
.row-head.selected {
    background: linear-gradient(#ffdf78, #fdcd4c);
    border-color: #c99f3e;
    color: #6b4e14;
}

.cell {
    border-right: 1px solid #dcdfe3;
    border-bottom: 1px solid #dcdfe3;
    white-space: nowrap;
}

.num {
    text-align: right;
    padding-right: 8px;
}

.num.neg {
    padding-right: 3px;
}

.bold .num,
.head .num,
.total .num {
    font-weight: 700;
}

.bold .num,
.head .num {
    color: #000;
}

.banner {
    height: 24px;
}

.banner .edge,
.banner .num {
    background-color: #0000f6;
    border-right-color: #0000f6;
    border-top: 1px solid #000060;
    border-bottom: 2px solid #00003a;
}

.head .edge,
.head .num {
    background-color: #c9f9fd;
    border-right-color: #c9f9fd;
    border-bottom: 1px solid #111;
}

.input .num {
    background-color: #fffe9b;
    border-color: #fffe9b;
    color: #3a1f8a;
}

.input.total .num {
    color: #160d98;
}

.note {
    grid-column: 14 / 18;
    padding-left: 3px;
    overflow: hidden;
}

.note.short {
    grid-column: 14 / 16;
}

/* Selected cell outline with its fill handle */
.active-cell {
    position: relative;
    outline: 2px solid #111;
    outline-offset: -1px;
}

.active-cell::after {
    content: "";
    position: absolute;
    right: -3px;
    bottom: -3px;
    width: 5px;
    height: 5px;
    background-color: #111;
    border: 1px solid #fff;
    box-sizing: content-box;
    border-right: none;
    border-bottom: none;
}

/* Scrollbars */
.vscroll {
    width: 15px;
    display: flex;
    flex-direction: column;
    align-items: center;
    background-color: #dcdfe5;
}

.split {
    width: 14px;
    height: 8px;
    border: 1px solid #74777d;
    background: linear-gradient(#fff 2px, #888 2px, #888 3px, #fff 3px);
}

.arrow {
    width: 0;
    height: 0;
    border: 4px solid transparent;
}

.arrow.up {
    margin-top: 2px;
    border-bottom: 5px solid #45484e;
}

.arrow.down {
    margin-top: 370px;
    border-top: 5px solid #45484e;
}

.vthumb {
    width: 14px;
    height: 49px;
    margin-top: 51px;
    border: 1px solid #8b8e95;
    background:
        repeating-linear-gradient(#777a80 0 1px, transparent 1px 3px) 2px 20px / 8px 8px no-repeat,
        linear-gradient(90deg, #f8f9fa, #dcdfe4);
}

/* Sheet tabs */
.sheetbar {
    height: 16px;
    display: flex;
    background: linear-gradient(#d2d6dd, #e1e4e9);
    border-top: 1px solid #9a9da3;
    color: #4f5258;
}

.sheet-nav {
    width: 62px;
    display: flex;
    align-items: center;
    justify-content: space-between;
    padding: 0 5px;
}

.sheet-nav svg {
    width: 8px;
    height: 8px;
}

.sheet-tab {
    width: 102px;
    text-align: center;
    line-height: 15px;
    border-left: 1px solid #a5a8ae;
    background-color: #dfe3e9;
    padding-left: 2px;
    letter-spacing: -0.2px;
}

.sheet-tab.active {
    width: 101px;
    background-color: #fff;
    font-weight: 700;
    letter-spacing: 0;
    padding-left: 0;
    padding-right: 9px;
    clip-path: polygon(0 0, 100% 0, 90% 100%, 0 100%);
}

/* New-sheet tab slides under the slanted edge of the active tab */
.sheet-tab.add {
    position: relative;
    width: 34px;
    border-left: none;
    background: none;
    padding: 0;
}

.add-edge {
    position: absolute;
    left: -12px;
    top: -1px;
    width: 46px;
    height: 16px;
}

.add-icon {
    position: relative;
    width: 15px;
    height: 13px;
    display: block;
    margin-top: 1px;
}

.hscroll {
    display: flex;
    align-items: center;
    margin-left: 450px;
}

.hsplit {
    width: 7px;
    height: 15px;
    border: 1px solid #7e8187;
    background: linear-gradient(90deg, #fff 2px, #888 2px, #888 3px, #fff 3px);
}

.arrow.left {
    margin-left: 3px;
    border-right: 5px solid #45484e;
}

.arrow.right {
    margin-left: 103px;
    margin-right: 1px;
    border-left: 5px solid #45484e;
}

.hthumb {
    width: 330px;
    height: 15px;
    margin-left: 30px;
    border: 1px solid #8b8e95;
    background:
        repeating-linear-gradient(90deg, #777a80 0 1px, transparent 1px 2px) center / 8px 7px no-repeat,
        linear-gradient(#f5f6f8, #dfe2e7);
}

/* Status bar */
.status {
    height: 23px;
    display: flex;
    align-items: center;
    border: 1px solid #8f9297;
    border-top-color: #a7aab0;
    background: linear-gradient(#e2e5e9, #cdd1d7 60%, #bfc3ca);
    padding-left: 7px;
}

.ready {
    width: 41px;
    letter-spacing: -0.45px;
    border-right: 1px solid #94979d;
}

.macro {
    width: 26px;
    height: 14px;
    margin-left: 4px;
}

.status-sep {
    width: 1px;
    height: 17px;
    margin-left: 4px;
    background-color: #94979d;
}

.views {
    width: 65px;
    display: flex;
    align-items: center;
    gap: 2px;
    margin-left: 924px;
    padding-left: 4px;
    border-left: 1px solid #94979d;
}

.view {
    width: 18px;
    height: 19px;
    display: flex;
    align-items: center;
    justify-content: center;
    flex-shrink: 0;
}

.view svg {
    width: 13px;
    height: 13px;
}

.view.on {
    border: 1px solid #c29a3c;
    border-radius: 2px;
    background-color: #fde07a;
}

.percent-text {
    width: 35px;
    margin-left: 5px;
    font-size: 11.5px;
    letter-spacing: -0.4px;
}

.zoomer {
    width: 134px;
    height: 18px;
    flex-shrink: 0;
}

.grip {
    width: 11px;
    height: 11px;
    align-self: flex-end;
    margin-left: 6px;
    background: radial-gradient(circle, #83868c 1px, transparent 1.3px) 0 0 / 4px 4px;
    clip-path: polygon(100% 0, 100% 100%, 0 100%);
}

/* Callout */
.callout {
    position: absolute;
    left: 774px;
    top: 6px;
    width: 404px;
    height: 138px;
}

.callout svg {
    display: block;
}

.callout p {
    position: absolute;
    left: 0;
    top: 55px;
    width: 397px;
    text-align: center;
    font-family: 'Liberation Sans', sans-serif;
    font-size: 24px;
    line-height: 28px;
    letter-spacing: 0.05px;
    color: #0c0c0c;
    white-space: nowrap;
}

.cursor {
    position: absolute;
    left: 423px;
    top: 313px;
    width: 18px;
    height: 18px;
}
```
